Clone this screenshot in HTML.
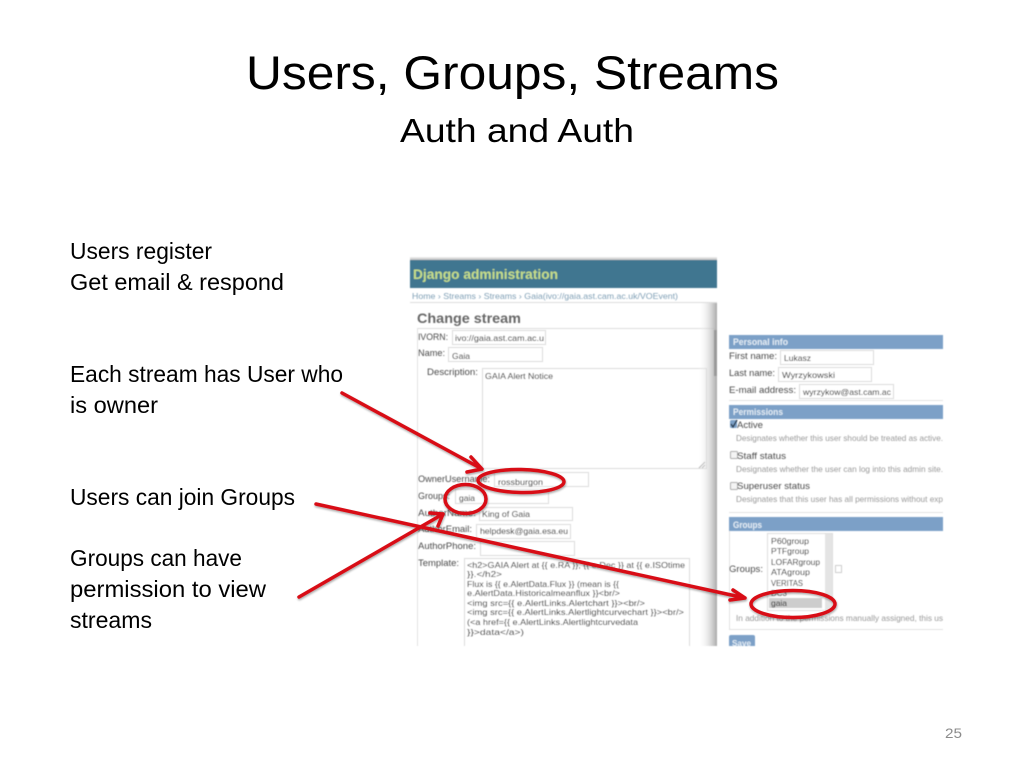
<!DOCTYPE html>
<html lang="en">
<head>
<meta charset="utf-8">
<title>Users, Groups, Streams</title>
<style>
html,body{margin:0;padding:0;background:#fff;width:1024px;height:768px;overflow:hidden}
svg{display:block;position:absolute;left:0;top:0}
text{font-family:"Liberation Sans",sans-serif}
.m{fill:#000}
.lb{font-size:9.5px;fill:#4a4a4a}
.in{fill:#fff;stroke:#dcdcdc;stroke-width:1}
.v{font-size:8.5px;fill:#111}
.h{font-size:9px;fill:#e4edf5;font-weight:bold}
.hp{font-size:8.5px;fill:#999}
.r{fill:none;stroke:#d80c14;stroke-width:3.500;stroke-linecap:round;stroke-linejoin:round}
</style>
</head>
<body>
<svg width="1024" height="768" viewBox="0 0 1024 768" xmlns="http://www.w3.org/2000/svg">
<defs>
<filter id="b" x="-2%" y="-2%" width="104%" height="104%"><feGaussianBlur stdDeviation="0.45"/></filter>
<filter id="s" x="-5%" y="-5%" width="110%" height="110%"><feGaussianBlur in="SourceAlpha" stdDeviation="1"/><feOffset dx="0.500" dy="1.500"/><feComponentTransfer><feFuncA type="linear" slope="0.350"/></feComponentTransfer><feMerge><feMergeNode/><feMergeNode in="SourceGraphic"/></feMerge></filter>
<linearGradient id="sh" x1="0" x2="1" y1="0" y2="0"><stop offset="0" stop-color="#fff" stop-opacity="0"/><stop offset="1" stop-color="#aaa"/></linearGradient>
<linearGradient id="tp" x1="0" x2="0" y1="0" y2="1"><stop offset="0" stop-color="#f0f0f0"/><stop offset="1" stop-color="#bdbdbd"/></linearGradient>
</defs>

<!-- slide text -->
<text class="m" x="246" y="89" font-size="47.5" textLength="533" lengthAdjust="spacingAndGlyphs">Users, Groups, Streams</text>
<text class="m" x="400" y="142" font-size="33" textLength="234" lengthAdjust="spacingAndGlyphs">Auth and Auth</text>
<text class="m" x="70" y="259" font-size="23" textLength="142" lengthAdjust="spacingAndGlyphs">Users register</text>
<text class="m" x="70" y="290" font-size="23" textLength="214" lengthAdjust="spacingAndGlyphs">Get email &amp; respond</text>
<text class="m" x="70" y="382" font-size="23" textLength="273" lengthAdjust="spacingAndGlyphs">Each stream has User who</text>
<text class="m" x="70" y="413" font-size="23" textLength="88" lengthAdjust="spacingAndGlyphs">is owner</text>
<text class="m" x="70" y="505" font-size="23" textLength="225" lengthAdjust="spacingAndGlyphs">Users can join Groups</text>
<text class="m" x="70" y="566" font-size="23" textLength="172" lengthAdjust="spacingAndGlyphs">Groups can have</text>
<text class="m" x="70" y="597" font-size="23" textLength="196" lengthAdjust="spacingAndGlyphs">permission to view</text>
<text class="m" x="70" y="628" font-size="23" textLength="82" lengthAdjust="spacingAndGlyphs">streams</text>
<text x="945" y="738" font-size="14" fill="#8b8b8b" textLength="17" lengthAdjust="spacingAndGlyphs">25</text>

<!-- left screenshot -->
<g filter="url(#b)">
<rect x="410" y="257" width="307" height="3" fill="url(#tp)"/>
<rect x="410" y="260" width="307" height="28" fill="#417690"/>
<text x="413" y="279" font-size="14" font-weight="bold" fill="#c6de8a" textLength="145" lengthAdjust="spacingAndGlyphs">Django administration</text>
<text x="412" y="299" font-size="8.5" fill="#7f9fb5" textLength="266" lengthAdjust="spacingAndGlyphs">Home › Streams › Streams › Gaia(ivo://gaia.ast.cam.ac.uk/VOEvent)</text>
<rect x="410" y="302" width="307" height="1" fill="#ddd"/>
<text x="417" y="323" font-size="13.5" font-weight="bold" fill="#666" textLength="104" lengthAdjust="spacingAndGlyphs">Change stream</text>
<rect x="417" y="328" width="300" height="1" fill="#ddd"/>
<rect x="417" y="328" width="1" height="318" fill="#e2e2e2"/>

<text class="lb" x="418" y="340" textLength="30" lengthAdjust="spacingAndGlyphs">IVORN:</text>
<rect class="in" x="452.500" y="330.500" width="93" height="14"/>
<text class="v" x="455" y="341" textLength="89" lengthAdjust="spacingAndGlyphs">ivo://gaia.ast.cam.ac.u</text>
<text class="lb" x="418" y="356" textLength="27" lengthAdjust="spacingAndGlyphs">Name:</text>
<rect class="in" x="448.500" y="347.500" width="94" height="14"/>
<text class="v" x="452" y="359" textLength="18" lengthAdjust="spacingAndGlyphs">Gaia</text>
<text class="lb" x="427" y="375" textLength="51" lengthAdjust="spacingAndGlyphs">Description:</text>
<rect class="in" x="482.500" y="368.500" width="224" height="100"/>
<text class="v" x="485" y="379" textLength="68" lengthAdjust="spacingAndGlyphs">GAIA Alert Notice</text>
<path d="M705 462l-6 6M705 465l-3 3" stroke="#aaa" stroke-width="1" fill="none"/>

<text class="lb" x="418" y="482" textLength="72" lengthAdjust="spacingAndGlyphs">OwnerUsername:</text>
<rect class="in" x="494.500" y="472.500" width="94" height="14"/>
<text class="v" x="498" y="485" textLength="45" lengthAdjust="spacingAndGlyphs">rossburgon</text>
<text class="lb" x="418" y="499" textLength="32" lengthAdjust="spacingAndGlyphs">Groups:</text>
<rect class="in" x="455.500" y="489.500" width="93" height="14"/>
<text class="v" x="459" y="501" textLength="16" lengthAdjust="spacingAndGlyphs">gaia</text>
<text class="lb" x="418" y="516" textLength="58" lengthAdjust="spacingAndGlyphs">AuthorName:</text>
<rect class="in" x="479.500" y="507.500" width="93" height="13"/>
<text class="v" x="482" y="517" textLength="48" lengthAdjust="spacingAndGlyphs">King of Gaia</text>
<text class="lb" x="418" y="532" textLength="54" lengthAdjust="spacingAndGlyphs">AuthorEmail:</text>
<rect class="in" x="476.500" y="524.500" width="94" height="14"/>
<text class="v" x="480" y="534" textLength="88" lengthAdjust="spacingAndGlyphs">helpdesk@gaia.esa.eu</text>
<text class="lb" x="418" y="549" textLength="58" lengthAdjust="spacingAndGlyphs">AuthorPhone:</text>
<rect class="in" x="480.500" y="541.500" width="94" height="14"/>
<text class="lb" x="418" y="566" textLength="41" lengthAdjust="spacingAndGlyphs">Template:</text>
<path d="M464.500 646V558.500H689.500V646" fill="#fff" stroke="#dcdcdc"/>
<g>
<text class="v" x="467" y="568" textLength="218" lengthAdjust="spacingAndGlyphs">&lt;h2&gt;GAIA Alert at {{ e.RA }}, {{ e.Dec }} at {{ e.ISOtime</text>
<text class="v" x="467" y="577" textLength="35" lengthAdjust="spacingAndGlyphs">}}.&lt;/h2&gt;</text>
<text class="v" x="467" y="587" textLength="152" lengthAdjust="spacingAndGlyphs">Flux is {{ e.AlertData.Flux }} (mean is {{</text>
<text class="v" x="467" y="596" textLength="153" lengthAdjust="spacingAndGlyphs">e.AlertData.Historicalmeanflux }}&lt;br/&gt;</text>
<text class="v" x="467" y="606" textLength="178" lengthAdjust="spacingAndGlyphs">&lt;img src={{ e.AlertLinks.Alertchart }}&gt;&lt;br/&gt;</text>
<text class="v" x="467" y="615" textLength="217" lengthAdjust="spacingAndGlyphs">&lt;img src={{ e.AlertLinks.Alertlightcurvechart }}&gt;&lt;br/&gt;</text>
<text class="v" x="467" y="625" textLength="171" lengthAdjust="spacingAndGlyphs">(&lt;a href={{ e.AlertLinks.Alertlightcurvedata</text>
<text class="v" x="467" y="635" textLength="57" lengthAdjust="spacingAndGlyphs">}}&gt;data&lt;/a&gt;)</text>
</g>
<rect x="698" y="303" width="19" height="343" fill="url(#sh)"/>
<rect x="714" y="330" width="3" height="46" fill="#999"/>
</g>

<!-- right screenshot -->
<g filter="url(#b)">
<rect x="729" y="335" width="214" height="14" fill="#7ca0c7"/>
<text class="h" x="733" y="345" textLength="55" lengthAdjust="spacingAndGlyphs">Personal info</text>
<text class="lb" x="729" y="359" textLength="48" lengthAdjust="spacingAndGlyphs">First name:</text>
<rect class="in" x="780.500" y="350.500" width="93" height="14"/>
<text class="v" x="784" y="361" textLength="27" lengthAdjust="spacingAndGlyphs">Lukasz</text>
<text class="lb" x="729" y="376" textLength="46" lengthAdjust="spacingAndGlyphs">Last name:</text>
<rect class="in" x="778.500" y="367.500" width="93" height="14"/>
<text class="v" x="782" y="378" textLength="53" lengthAdjust="spacingAndGlyphs">Wyrzykowski</text>
<text class="lb" x="729" y="393" textLength="67" lengthAdjust="spacingAndGlyphs">E-mail address:</text>
<rect class="in" x="799.500" y="384.500" width="94" height="14"/>
<text class="v" x="803" y="395" textLength="88" lengthAdjust="spacingAndGlyphs">wyrzykow@ast.cam.ac</text>
<rect x="729" y="400" width="214" height="1" fill="#e2e2e2"/>

<rect x="729" y="405" width="214" height="14" fill="#7ca0c7"/>
<text class="h" x="733" y="415" textLength="50" lengthAdjust="spacingAndGlyphs">Permissions</text>
<rect x="730" y="420" width="7" height="8" rx="1.500" fill="#7ca0c7"/>
<path d="M731 424l2 3 4-7" stroke="#234" stroke-width="1.300" fill="none"/>
<text class="lb" x="737" y="428" textLength="26" lengthAdjust="spacingAndGlyphs">Active</text>
<text class="hp" x="736" y="441" textLength="207" lengthAdjust="spacingAndGlyphs">Designates whether this user should be treated as active.</text>
<rect x="730.500" y="451.500" width="7" height="7" rx="1" fill="#f4f4f4" stroke="#aaa"/>
<text class="lb" x="737" y="459" textLength="49" lengthAdjust="spacingAndGlyphs">Staff status</text>
<text class="hp" x="736" y="472" textLength="207" lengthAdjust="spacingAndGlyphs">Designates whether the user can log into this admin site.</text>
<rect x="730.500" y="482.500" width="7" height="7" rx="1" fill="#f4f4f4" stroke="#aaa"/>
<text class="lb" x="737" y="489" textLength="73" lengthAdjust="spacingAndGlyphs">Superuser status</text>
<text class="hp" x="736" y="502" textLength="207" lengthAdjust="spacingAndGlyphs">Designates that this user has all permissions without exp</text>
<rect x="729" y="512" width="214" height="1" fill="#e2e2e2"/>

<rect x="729" y="517" width="214" height="14" fill="#7ca0c7"/>
<text class="h" x="733" y="528" textLength="29" lengthAdjust="spacingAndGlyphs">Groups</text>
<rect x="729" y="531" width="1" height="98" fill="#e2e2e2"/>
<text class="lb" x="729" y="572" textLength="34" lengthAdjust="spacingAndGlyphs">Groups:</text>
<rect x="767.500" y="533.500" width="65" height="77" fill="#fff" stroke="#ddd"/>
<rect x="825" y="534" width="7" height="76" fill="#e4e4e4"/>
<rect x="769" y="598" width="53" height="10" fill="#cdcdcd"/>
<text class="v" x="771" y="544" textLength="38" lengthAdjust="spacingAndGlyphs">P60group</text>
<text class="v" x="771" y="554" textLength="38" lengthAdjust="spacingAndGlyphs">PTFgroup</text>
<text class="v" x="771" y="565" textLength="49" lengthAdjust="spacingAndGlyphs">LOFARgroup</text>
<text class="v" x="771" y="575" textLength="39" lengthAdjust="spacingAndGlyphs">ATAgroup</text>
<text class="v" x="771" y="586" textLength="32" lengthAdjust="spacingAndGlyphs">VERITAS</text>
<text class="v" x="771" y="596" textLength="16" lengthAdjust="spacingAndGlyphs">DC3</text>
<text class="v" x="771" y="606" textLength="16" lengthAdjust="spacingAndGlyphs">gaia</text>
<rect x="835.500" y="565.500" width="6" height="7" fill="#fff" stroke="#ccc"/>
<text class="hp" x="736" y="621" textLength="207" lengthAdjust="spacingAndGlyphs">In addition to the permissions manually assigned, this us</text>
<rect x="729" y="629" width="214" height="1" fill="#e2e2e2"/>
<path d="M729 646V637q0-2 2-2H753q2 0 2 2V646Z" fill="#7ca0c7"/>
<text x="732" y="646" font-size="8.500" font-weight="bold" fill="#e4edf5" textLength="19" lengthAdjust="spacingAndGlyphs">Save</text>
</g>

<!-- annotations -->
<g filter="url(#s)">
<ellipse class="r" cx="521" cy="481" rx="43" ry="11.500" transform="rotate(1 521 481)"/>
<ellipse class="r" cx="465.500" cy="499" rx="20.500" ry="14.500"/>
<ellipse class="r" cx="793" cy="604" rx="42" ry="13.500"/>
<path class="r" d="M342 393L482 469M471 457L482 469L467 472"/>
<path class="r" d="M299 597L443 514M430 513L443 514L438 526"/>
<path class="r" d="M316 504L745 598M733 590L745 598L730 600"/>
</g>
</svg>
</body>
</html>
